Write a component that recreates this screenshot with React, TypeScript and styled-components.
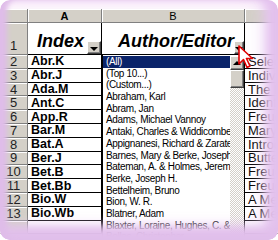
import { Fragment } from "react";
import styled, { createGlobalStyle } from "styled-components";

const GlobalStyle = createGlobalStyle`
  html, body {
    margin: 0;
    padding: 0;
    background: #fff;
  }
  body {
    font-family: "Liberation Sans", Arial, sans-serif;
  }
`

const Frame = styled.div`
  position: relative;
  width: 278px;
  height: 240px;
  box-sizing: border-box;
  padding-top: 9px;
  overflow: hidden;
  border-radius: 10px;
  background: #fbf4fb;
`

const Sheet = styled.div`
  display: grid;
  grid-template-columns: 28px 74px 143px 40px;
  grid-template-rows: 14px 32px repeat(13, 13.8px);
  background: #fff;
`

const ColHead = styled.div<{ $bold?: boolean }>`
  box-sizing: border-box;
  background: #d4d0c8;
  border-right: 1px solid #808080;
  border-bottom: 1px solid #808080;
  box-shadow: inset 1px 1px 0 #fff;
  display: flex;
  align-items: center;
  justify-content: center;
  font-size: 11px;
  font-weight: ${(p) => (p.$bold ? 700 : 400)};
  color: #000;
`

const RowHead = styled.div<{ $bottom?: boolean }>`
  box-sizing: border-box;
  background: #d4d0c8;
  border-right: 1px solid #808080;
  border-bottom: 1px solid #808080;
  box-shadow: inset 1px 1px 0 #fff;
  display: flex;
  justify-content: center;
  align-items: ${(p) => (p.$bottom ? "flex-end" : "center")};
  padding-bottom: ${(p) => (p.$bottom ? "2px" : "0")};
  font-size: 13px;
  line-height: 13px;
  color: #222;
`

const TitleCell = styled.div<{ $pad: number }>`
  box-sizing: border-box;
  border-right: 1px solid #000;
  border-bottom: 1px solid #000;
  display: flex;
  align-items: flex-end;
  justify-content: space-between;
  padding-left: ${(p) => p.$pad}px;
  span {
    font-size: 18px;
    line-height: 18px;
    font-weight: 700;
    font-style: italic;
    margin-bottom: 4px;
  }
`

const FilterButton = styled.div`
  box-sizing: border-box;
  width: 14px;
  height: 13px;
  background: #d4d0c8;
  border-top: 1px solid #fff;
  border-left: 1px solid #fff;
  border-right: 1px solid #404040;
  border-bottom: 1px solid #404040;
  box-shadow: inset -1px -1px 0 #808080;
  display: flex;
  align-items: center;
  justify-content: center;
  &::after {
    content: "";
    border-left: 4px solid transparent;
    border-right: 4px solid transparent;
    border-top: 4px solid #000;
    margin-top: 2px;
  }
`

const Cell = styled.div<{ $bold?: boolean }>`
  box-sizing: border-box;
  border-right: 1px solid #000;
  border-bottom: 1px solid #000;
  padding-left: 3px;
  display: flex;
  align-items: center;
  white-space: nowrap;
  overflow: hidden;
  font-size: ${(p) => (p.$bold ? "12.5px" : "13px")};
  font-weight: ${(p) => (p.$bold ? 700 : 400)};
  color: #000;
`

const DropList = styled.div`
  grid-column: 3;
  grid-row: 3 / span 14;
  box-sizing: border-box;
  border-left: 1px solid #000;
  border-right: 1px solid #000;
  background: #fff;
  display: flex;
  padding-top: 1px;
`

const Items = styled.div`
  flex: 1;
  min-width: 0;
  overflow: hidden;
`

const Item = styled.div<{ $active?: boolean }>`
  height: 11.7px;
  line-height: 11.7px;
  padding-left: 3px;
  font-size: 10px;
  letter-spacing: -0.35px;
  white-space: nowrap;
  background: ${(p) => (p.$active ? "#0a246a" : "transparent")};
  color: ${(p) => (p.$active ? "#fff" : "#000")};
`

const ScrollBar = styled.div`
  width: 14px;
  display: flex;
  flex-direction: column;
  background: repeating-conic-gradient(#d4d0c8 0 25%, #fff 0 50%) 0 0 / 2px 2px;
`

const ScrollButton = styled.div<{ $h: number }>`
  box-sizing: border-box;
  height: ${(p) => p.$h}px;
  background: #d4d0c8;
  border-top: 1px solid #fff;
  border-left: 1px solid #fff;
  border-right: 1px solid #404040;
  border-bottom: 1px solid #404040;
  box-shadow: inset -1px -1px 0 #808080;
  display: flex;
  align-items: center;
  justify-content: center;
`

const UpArrow = styled.div`
  border-left: 4px solid transparent;
  border-right: 4px solid transparent;
  border-bottom: 4px solid #000;
`

const Cursor = styled.svg`
  position: absolute;
  left: 238px;
  top: 45px;
`

const Fade = styled.div`
  position: absolute;
  inset: 0;
  pointer-events: none;
  border-radius: 10px;
  box-shadow:
    inset 8px 0 5px -1px #dfbde9,
    inset 0 -14px 8px -2px #e1bfeb,
    inset 0 -24px 14px -10px rgba(230, 200, 240, 0.85),
    inset -12px 0 8px -2px #e4c2ee,
    inset -26px 0 16px -12px rgba(232, 200, 242, 0.85),
    inset 0 8px 4px -2px #fbf1fb;
`

const rows = [
  { a: "Abr.K", c: "Selected" },
  { a: "Abr.J", c: "Individual" },
  { a: "Ada.M", c: "The Inner" },
  { a: "Ant.C", c: "Identity" },
  { a: "App.R", c: "Freud" },
  { a: "Bar.M", c: "Mary" },
  { a: "Bat.A", c: "Introduction" },
  { a: "Ber.J", c: "Butterfly" },
  { a: "Bet.B", c: "Freud" },
  { a: "Bet.Bb", c: "Freud" },
  { a: "Bio.W", c: "A Memoir" },
  { a: "Bio.Wb", c: "A Memoir" },
  { a: "", c: "" },
]

const authors = [
  "(All)",
  "(Top 10...)",
  "(Custom...)",
  "Abraham, Karl",
  "Abram, Jan",
  "Adams, Michael Vannoy",
  "Antaki, Charles & Widdicombe",
  "Appignanesi, Richard & Zarate",
  "Barnes, Mary & Berke, Joseph",
  "Bateman, A. & Holmes, Jerem",
  "Berke, Joseph H.",
  "Bettelheim, Bruno",
  "Bion, W. R.",
  "Blatner, Adam",
  "Blaxter, Loraine, Hughes, C. &",
  "Bollas, Christopher",
]

export default function App() {
  return (
    <>
      <GlobalStyle />
      <Frame>
        <Sheet>
          <ColHead />
          <ColHead $bold>A</ColHead>
          <ColHead>B</ColHead>
          <ColHead />

          <RowHead $bottom>1</RowHead>
          <TitleCell $pad={9}>
            <span>Index</span>
            <FilterButton />
          </TitleCell>
          <TitleCell $pad={16}>
            <span>Author/Editor</span>
            <FilterButton />
          </TitleCell>
          <Cell />

          <DropList>
            <Items>
              {authors.map((name, i) => (
                <Item key={name} $active={i === 0}>{name}</Item>
              ))}
            </Items>
            <ScrollBar>
              <ScrollButton $h={14}>
                <UpArrow />
              </ScrollButton>
              <ScrollButton $h={18} />
            </ScrollBar>
          </DropList>

          {rows.map((row, i) => (
            <Fragment key={i}>
              <RowHead style={{ gridColumn: 1, gridRow: i + 3 }}>{i < 12 ? i + 2 : ""}</RowHead>
              <Cell $bold style={{ gridColumn: 2, gridRow: i + 3 }}>{row.a}</Cell>
              <Cell style={{ gridColumn: 4, gridRow: i + 3 }}>{row.c}</Cell>
            </Fragment>
          ))}
        </Sheet>

        <Cursor width="16" height="26" viewBox="0 0 16 26">
          <path
            d="M1 1 L1 19 L5.5 14.5 L9 22.5 L12 21 L8.5 13.5 L14.5 13.5 Z"
            fill="#fff"
            stroke="#e00000"
            strokeWidth="1.6"
            strokeLinejoin="round"
          />
        </Cursor>
        <Fade />
      </Frame>
    </>
  )
}
